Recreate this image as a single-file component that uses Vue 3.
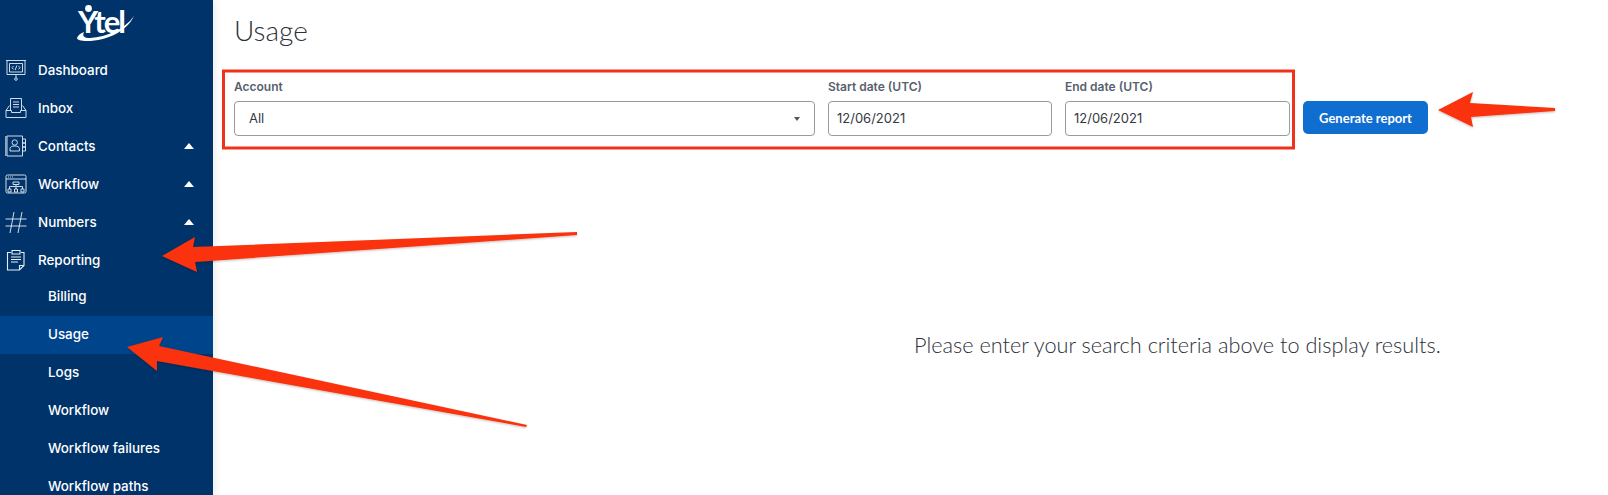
<template>
  <div class="page">
    <aside class="sidebar">
      <div class="logo">
        <svg width="60" height="46" viewBox="0 -5 60 46">
          <circle cx="11.500" cy="3.500" r="3.400" fill="#fff" />
          <text x="1" y="28" class="logo-text">Ytel</text>
          <path d="M0 33 C1 30 4 28 7 27 C5 31 7 33 13 33 C30 32 48 24 57 11 C50 26 30 36 10 36 C4 36 0 35 0 33 Z" fill="#fff" />
        </svg>
      </div>

      <nav class="nav">
        <div v-for="item in mainItems" :key="item.label" class="nav-row top">
          <svg class="nav-icon" width="22" height="22" viewBox="0 0 22 22" fill="none" stroke="#e6edf5" stroke-width="0.9">
            <template v-if="item.icon === 'dashboard'">
              <path d="M1 1.500h20M2 1.500v14h18v-14M4.500 4.500h13v8.500h-13zM11 15.500v3" />
              <circle cx="11" cy="20" r="1.300" />
              <path d="M8.500 7l-1.500 1.700 1.500 1.700M13.500 7l1.500 1.700-1.500 1.700M11.800 6.500l-1.600 4.500" />
            </template>
            <template v-else-if="item.icon === 'inbox'">
              <path d="M1 13.500v7h20v-7l-3.500-5M1 13.500l3.500-5M1 13.500h5.500v2h9v-2h5.500" />
              <path d="M5.500 13V1.500h11V13M8 5h6M8 7.500h6M8 10h6" />
            </template>
            <template v-else-if="item.icon === 'contacts'">
              <path d="M2 1h15.500v20H2zM0.800 1v20M17.500 4h3v4h-3M17.500 8h3v4h-3M17.500 12h3v4h-3" />
              <circle cx="9.700" cy="7.500" r="2.700" />
              <path d="M5 16v-2.500c0-1.500 2-2.500 4.700-2.500s4.700 1 4.700 2.500V16z" />
            </template>
            <template v-else-if="item.icon === 'workflow'">
              <rect x="1" y="2" width="20" height="18" rx="1.500" />
              <path d="M1 6h20M8 9h6v2.500H8zM11 11.500v2M4.500 16v-2.500h13V16M11 13.500V16M3 16h3v3H3zM9.500 16h3v3h-3zM16 16h3v3h-3z" />
              <path d="M3 4h1M5 4h1M7 4h1" />
            </template>
            <template v-else-if="item.icon === 'hash'">
              <path d="M0.500 8h21M0.500 15h21M9 1L5 22M17 1l-4 21" />
            </template>
            <template v-else>
              <path d="M6 3.500H2.500v17.500h12l4.500-4.500V3.500H16M14.500 21v-4.500H19" stroke-width="1.100" />
              <path d="M7 1.500h8V5H7zM6 8h10M6 10.500h10M6 13h7" stroke-width="1.100" />
            </template>
          </svg>
          <span>{{ item.label }}</span>
          <i v-if="item.caret" class="caret"></i>
        </div>

        <div
          v-for="item in subItems"
          :key="item"
          class="nav-row sub"
          :class="{ active: item === 'Usage' }"
        >
          <span>{{ item }}</span>
        </div>
      </nav>
    </aside>

    <main class="main">
      <h1 class="title">Usage</h1>

      <div class="filters">
        <div class="field account">
          <label>Account</label>
          <div class="control select">
            <span>All</span>
            <i class="select-caret"></i>
          </div>
        </div>
        <div class="field start">
          <label>Start date (UTC)</label>
          <div class="control">12/06/2021</div>
        </div>
        <div class="field end">
          <label>End date (UTC)</label>
          <div class="control">12/06/2021</div>
        </div>
        <button class="generate">Generate report</button>
      </div>

      <p class="empty">Please enter your search criteria above to display results.</p>
    </main>

    <!-- screenshot annotations drawn on top of the app -->
    <svg class="annotations" width="1608" height="495" viewBox="0 0 1608 495">
      <defs>
        <filter id="soft" x="-5%" y="-20%" width="110%" height="140%">
          <feDropShadow dx="0" dy="1" stdDeviation="1" flood-color="#000" flood-opacity="0.25" />
        </filter>
      </defs>
      <rect x="223.500" y="71" width="1070" height="77" fill="none" stroke="#f0321a" stroke-width="3" />
      <g fill="#fa3209" filter="url(#soft)">
        <polygon points="162,256 195,237 193,247 577,232 577,235 195,262 197,272" />
        <polygon points="127,347 163,337 159,346 527,425 526,427 157,361 157,371" />
        <polygon points="1438,110 1473,92 1470,103 1555,108 1555,111 1471,117 1473,127" />
      </g>
    </svg>
  </div>
</template>

<script setup>
const mainItems = [
  { label: "Dashboard", icon: "dashboard" },
  { label: "Inbox", icon: "inbox" },
  { label: "Contacts", icon: "contacts", caret: true },
  { label: "Workflow", icon: "workflow", caret: true },
  { label: "Numbers", icon: "hash", caret: true },
  { label: "Reporting", icon: "report" },
];

const subItems = ["Billing", "Usage", "Logs", "Workflow", "Workflow failures", "Workflow paths"];
</script>

<style>
html,
body {
  margin: 0;
  overflow: hidden;
  background: #fff;
}
</style>

<style scoped>
.page {
  position: relative;
  display: flex;
  width: 1608px;
  height: 495px;
  overflow: hidden;
}

.sidebar {
  flex: 0 0 213px;
  background: #00336a;
  color: #fff;
  box-shadow: 2px 0 8px rgba(0, 0, 0, 0.08);
  font-family: Inter, sans-serif;
  font-size: 13.400px;
  font-weight: 500;
}

.logo {
  display: flex;
  justify-content: center;
  height: 50px;
}

.logo-text {
  font-family: Lato, sans-serif;
  font-size: 31px;
  font-weight: 700;
  fill: #fff;
  letter-spacing: -2px;
}

.nav-row {
  display: flex;
  align-items: center;
  box-sizing: border-box;
  height: 38px;
  padding-left: 5px;
}

.top {
  padding-top: 2px;
}

.nav-icon {
  margin-right: 11px;
  flex: none;
}

.caret {
  margin-left: auto;
  margin-right: 19px;
  border-left: 5.500px solid transparent;
  border-right: 5.500px solid transparent;
  border-bottom: 6px solid #fff;
}

.sub {
  padding-left: 48px;
  padding-bottom: 2px;
}

.active {
  background: #00448c;
}

.main {
  flex: 1;
  padding-left: 21px;
  color: #333a42;
}

.title {
  margin: 0;
  padding-top: 13px;
  font-family: Lato, sans-serif;
  font-size: 28px;
  font-weight: 300;
  line-height: 34px;
  color: #2b3138;
}

.filters {
  display: flex;
  align-items: flex-start;
  margin-top: 31px;
}

.field label {
  display: block;
  height: 23px;
  padding-top: 1px;
  box-sizing: border-box;
  line-height: 16px;
  font-family: Inter, sans-serif;
  font-size: 12px;
  font-weight: 600;
  color: #56616e;
}

.account {
  width: 581px;
  margin-right: 13px;
}

.start {
  width: 224px;
  margin-right: 13px;
}

.end {
  width: 225px;
  margin-right: 13px;
}

.control {
  display: flex;
  align-items: center;
  box-sizing: border-box;
  height: 35px;
  padding: 0 0 2px 8px;
  border: 1px solid #9a9a9a;
  border-radius: 4px;
  font-family: Inter, sans-serif;
  font-size: 13px;
  color: #343a40;
}

.select {
  padding: 0 14px 2px 14px;
  justify-content: space-between;
}

.select-caret {
  border-left: 3.500px solid transparent;
  border-right: 3.500px solid transparent;
  border-top: 4px solid #555;
  margin-top: 2px;
}

.generate {
  width: 125px;
  height: 33px;
  margin-top: 23px;
  border: none;
  border-radius: 5px;
  background: #106ed0;
  color: #fff;
  font-family: Lato, sans-serif;
  font-size: 13px;
  font-weight: 700;
}

.empty {
  margin: 197px 0 0 680px;
  font-family: Lato, sans-serif;
  font-size: 21.700px;
  font-weight: 300;
  line-height: 24px;
  color: #2b3138;
}

.annotations {
  position: absolute;
  inset: 0;
  pointer-events: none;
}
</style>
